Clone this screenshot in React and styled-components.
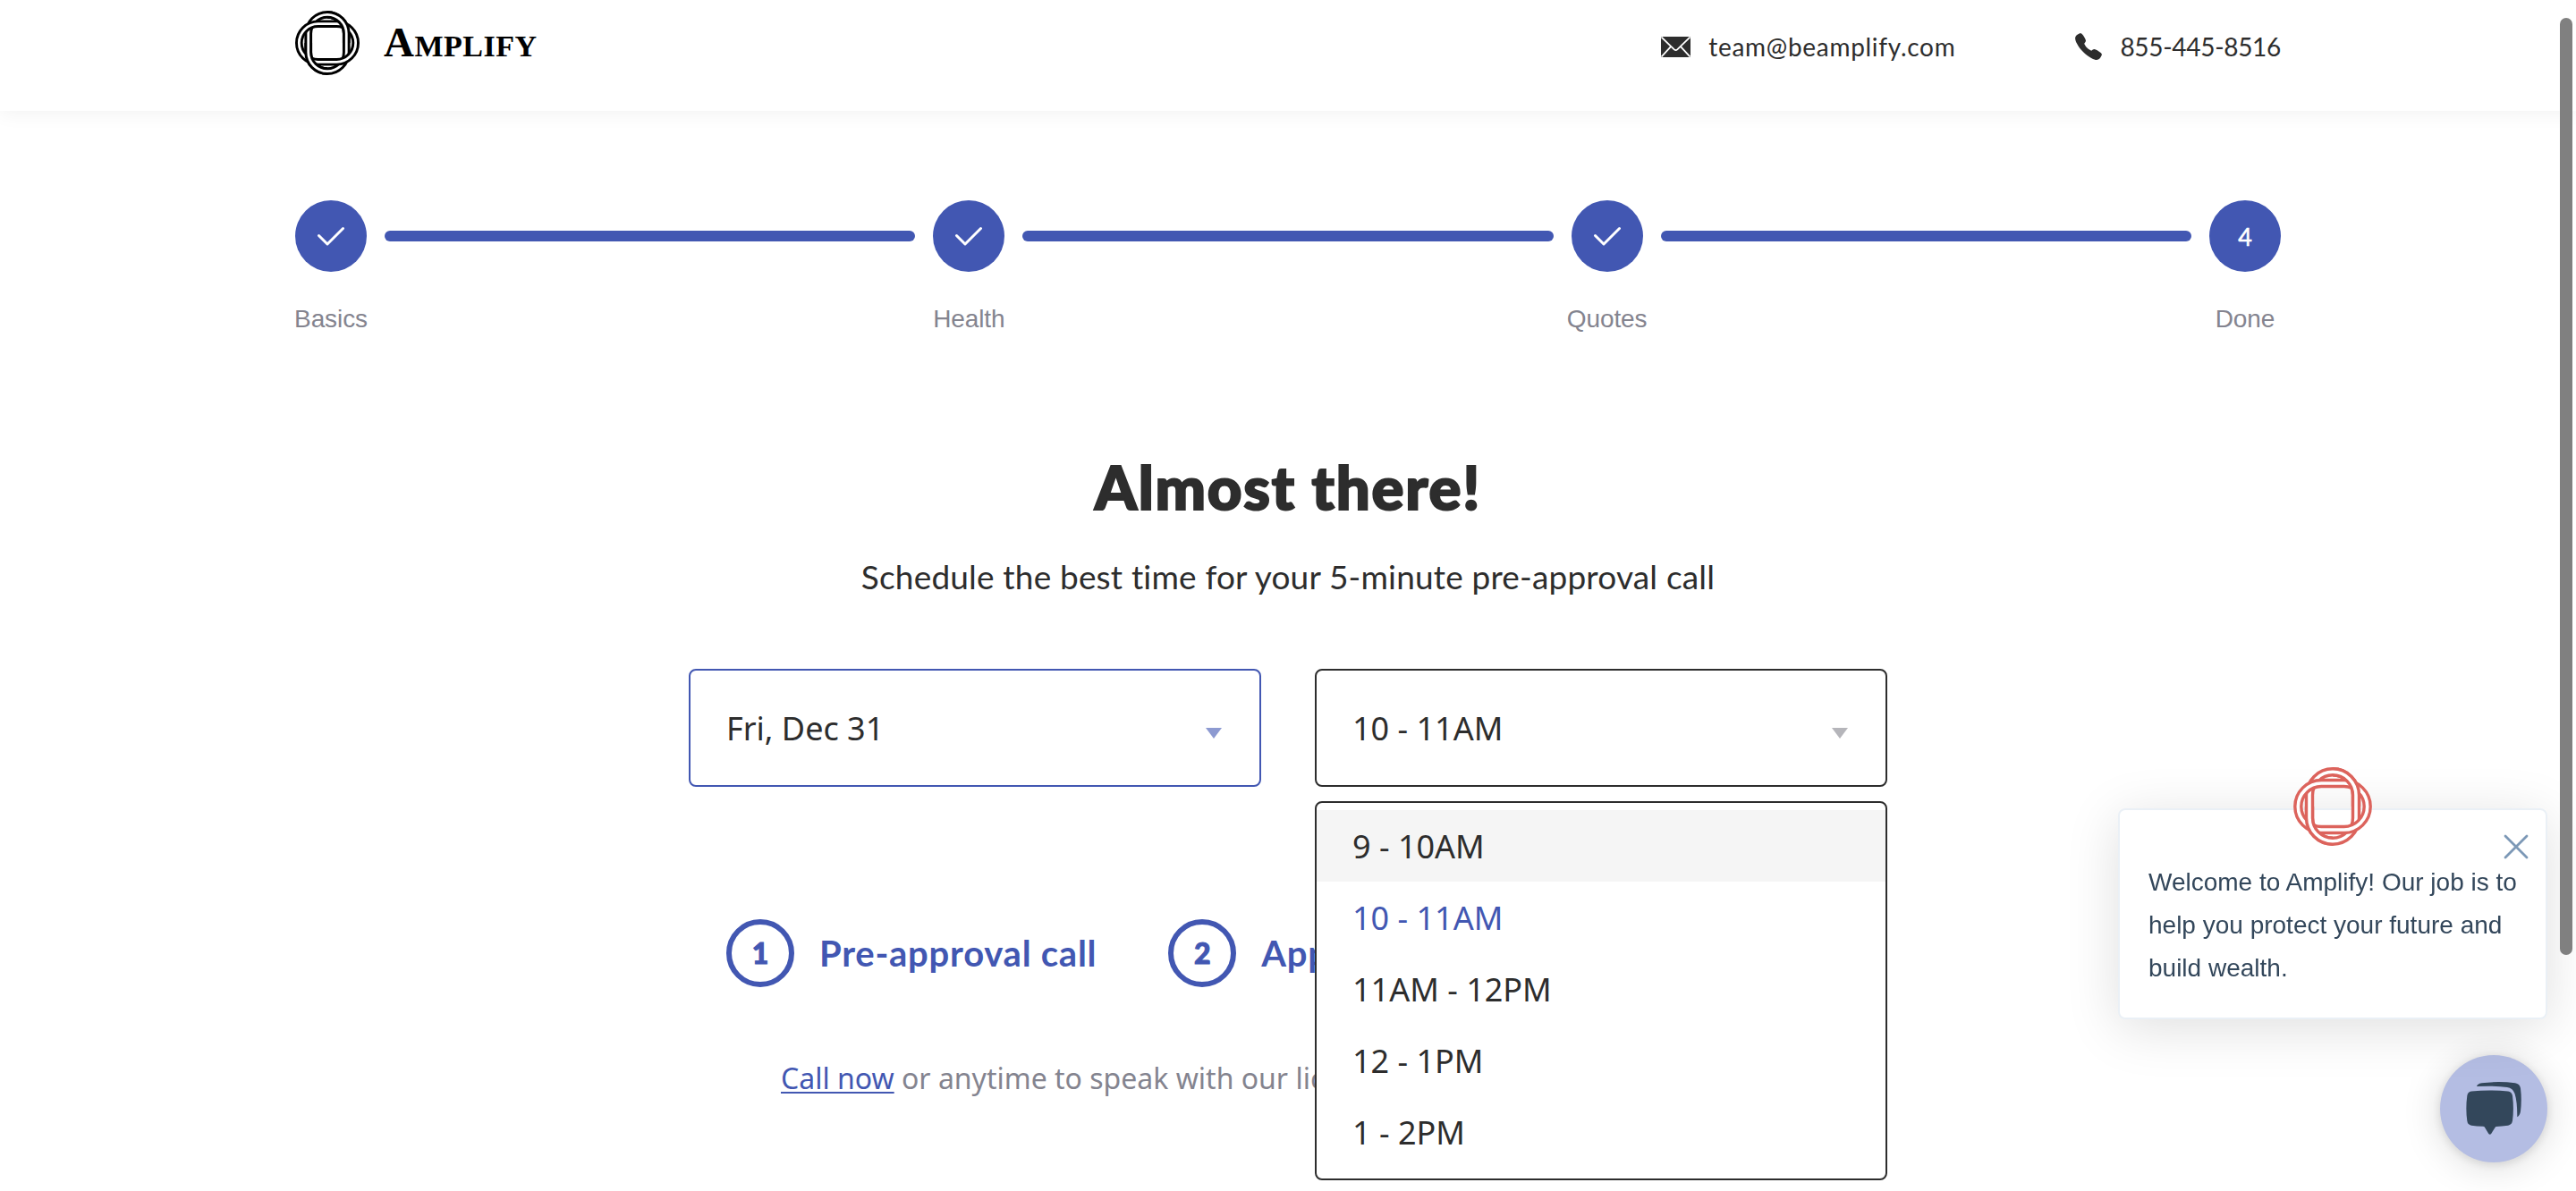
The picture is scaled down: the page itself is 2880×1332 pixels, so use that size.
import React from "react";
import styled, { createGlobalStyle } from "styled-components";
import { IoCall } from "react-icons/io5";

const blue = "#4257b2";
const ink = "#2d2d2d";
const grey = "#84848f";

const GlobalStyle = createGlobalStyle`
  * { box-sizing: border-box; }
  html, body { margin: 0; padding: 0; background: #fff; overflow: hidden; }
`;

const Page = styled.div`
  height: 1332px;
  overflow: hidden;
  background: #fff;
  color: ${ink};
  font-family: Lato, "Open Sans", sans-serif;
`;

const Header = styled.header`
  display: flex;
  justify-content: space-between;
  align-items: flex-start;
  height: 124px;
  padding: 12px 330px 0;
  background: #fff;
  box-shadow: 0 4px 20px rgba(0, 0, 0, 0.05);
`;

const Brand = styled.a`
  display: flex;
  align-items: center;
  height: 72px;
  gap: 27px;
  color: #000;
`;

const Wordmark = styled.div`
  padding-top: 3px;
  font-family: "Liberation Serif", serif;
  font-weight: 700;
  font-size: 34px;
  line-height: 48px;
  letter-spacing: 0.5px;
  white-space: nowrap;

  &::first-letter {
    font-size: 47px;
  }
`;

const Contacts = styled.div`
  display: flex;
  gap: 132px;
  padding-top: 23px;
`;

const Contact = styled.a`
  display: flex;
  align-items: center;
  height: 34px;
  gap: ${(p) => p.$gap}px;
  font-size: 28px;
  line-height: 34px;
  letter-spacing: ${(p) => p.$tracking}px;
  color: ${ink};
  white-space: nowrap;
`;

const Stepper = styled.ol`
  display: flex;
  align-items: flex-start;
  gap: 20px;
  margin: 0;
  padding: 100px 330px 0;
  list-style: none;
`;

const Step = styled.li`
  display: flex;
  flex-direction: column;
  align-items: center;
  flex: 0 0 80px;
  width: 80px;
`;

const StepDot = styled.div`
  display: flex;
  align-items: center;
  justify-content: center;
  width: 80px;
  height: 80px;
  border-radius: 50%;
  background: ${blue};
  color: #fff;
  font-size: 27px;
  -webkit-text-stroke: 0.5px #fff;
`;

const StepLabel = styled.span`
  margin: 37px 0 -1px;
  font-family: "Liberation Sans", Arial, sans-serif;
  font-size: 28px;
  line-height: 32px;
  letter-spacing: -0.1px;
  color: ${grey};
  white-space: nowrap;
`;

const StepBar = styled.li`
  flex: 1;
  height: 12px;
  margin-top: 34px;
  border-radius: 6px;
  background: ${blue};
`;

const Main = styled.main`
  display: flex;
  flex-direction: column;
  align-items: center;
  padding-top: 132px;
`;

const Title = styled.h1`
  margin: 0;
  font-size: 67px;
  font-weight: 900;
  line-height: 80px;
  letter-spacing: 1.8px;
  -webkit-text-stroke: 2.2px ${ink};
`;

const Subtitle = styled.p`
  margin: 37px 0 0;
  font-size: 37px;
  line-height: 48px;
  letter-spacing: 0.18px;
`;

const Fields = styled.div`
  display: flex;
  gap: 60px;
  margin-top: 79px;
`;

const Field = styled.div`
  position: relative;
  width: 640px;
`;

const SelectBox = styled.button`
  display: flex;
  align-items: center;
  justify-content: space-between;
  width: 100%;
  height: 132px;
  padding: 0 42px 0 40px;
  border: 2px solid ${(p) => p.$color};
  border-radius: 8px;
  background: #fff;
  font-family: "Noto Sans", sans-serif;
  font-size: 36px;
  color: ${ink};
`;

const Caret = styled.span`
  margin-top: 12px;
  border: 9.5px solid transparent;
  border-top: 12px solid ${(p) => p.$color};
  border-bottom: 0;
`;

const Menu = styled.ul`
  position: absolute;
  top: 148px;
  left: 0;
  width: 100%;
  height: 424px;
  margin: 0;
  padding: 8px 0 12px;
  border: 2px solid ${ink};
  border-radius: 8px;
  background: #fff;
  list-style: none;
  z-index: 2;
`;

const Option = styled.li`
  height: 80px;
  padding-left: 40px;
  font-family: "Noto Sans", sans-serif;
  font-size: 36px;
  line-height: 82px;
  color: ${(p) => (p.$selected ? blue : ink)};
  background: ${(p) => (p.$hovered ? "#f5f5f5" : "transparent")};
`;

const Lower = styled.section`
  width: 1340px;
  margin-top: 148px;
`;

const Phases = styled.div`
  display: flex;
  gap: 80px;
  padding-left: 42px;
`;

const Phase = styled.div`
  display: flex;
  align-items: center;
  gap: 28px;
  color: ${blue};
  font-size: 40px;
  font-weight: 700;
  line-height: 48px;
  letter-spacing: 0.75px;
  white-space: nowrap;
`;

const PhaseNumber = styled.span`
  display: flex;
  align-items: center;
  justify-content: center;
  flex: none;
  width: 76px;
  height: 76px;
  border: 6px solid ${blue};
  border-radius: 50%;
  font-size: 32px;
  font-weight: 900;
  letter-spacing: 0;
  -webkit-text-stroke: 1px ${blue};
`;

const CallLine = styled.p`
  margin: 80px 0 0;
  padding-left: 103px;
  font-family: "Noto Sans", sans-serif;
  font-size: 32px;
  line-height: 44px;
  color: ${grey};
  white-space: nowrap;
`;

const CallLink = styled.a`
  color: ${blue};
  text-decoration: underline;
  text-decoration-thickness: 2px;
  text-underline-offset: 3px;
`;

const Widget = styled.aside`
  position: fixed;
  right: 32px;
  bottom: 32px;
  display: flex;
  flex-direction: column;
  align-items: flex-end;
  gap: 40px;
`;

const Greeting = styled.div`
  position: relative;
  width: 480px;
  height: 236px;
  padding: 57px 20px 31px 32px;
  border: 2px solid #eaf0f6;
  border-radius: 8px;
  background: #fff;
  box-shadow: 0 10px 60px rgba(0, 0, 0, 0.13);
  font-family: "Liberation Sans", Arial, sans-serif;
  font-size: 28px;
  line-height: 48px;
  color: #33475b;
`;

const Avatar = styled.span`
  position: absolute;
  top: -48px;
  left: 194px;
  display: flex;
`;

const Close = styled.span`
  position: absolute;
  top: 27px;
  right: 19px;
  display: flex;
`;

const ChatButton = styled.button`
  display: flex;
  align-items: center;
  justify-content: center;
  width: 120px;
  height: 120px;
  padding: 0;
  border: 0;
  border-radius: 50%;
  background: #b4bde3;
  box-shadow: 0 2px 12px rgba(0, 0, 0, 0.12), 0 4px 44px rgba(0, 0, 0, 0.15);
`;

const ScrollThumb = styled.div`
  position: fixed;
  top: 20px;
  right: 4px;
  width: 14px;
  height: 1048px;
  border-radius: 7px;
  background: #808080;
`;

function Loop({ color, line, wide }) {
  const w = wide ? 77.4 : 52;
  const h = wide ? 52 : 77.4;
  const box = { x: -w / 2, y: -h / 2, width: w, height: h, rx: 26, fill: "none" };
  return (
    <g>
      <rect {...box} stroke={color} strokeWidth={7 + line} />
      <rect {...box} stroke="#fff" strokeWidth={7 - line} />
    </g>
  );
}

function Knot({ size, color, line, id }) {
  return (
    <svg width={size} height={size} viewBox="-44 -44 88 88">
      <clipPath id={id}>
        <rect x="0" y="-44" width="44" height="44" />
        <rect x="-44" y="0" width="44" height="44" />
      </clipPath>
      <Loop color={color} line={line} />
      <Loop color={color} line={line} wide />
      <g clipPath={`url(#${id})`}>
        <Loop color={color} line={line} />
      </g>
    </svg>
  );
}

const Envelope = () => (
  <svg width="33" height="23" viewBox="0 0 33 23">
    <rect width="33" height="23" rx="1" fill={ink} />
    <path
      d="M0.5 0.5 L14.8 14.4 Q16.5 15.8 18.2 14.4 L32.5 0.5 M0.5 22.5 L11 11.2 M32.5 22.5 L22 11.2"
      fill="none"
      stroke="#fff"
      strokeWidth="1.8"
    />
  </svg>
);

const Check = () => (
  <svg width="32" height="22" viewBox="0 0 32 22" fill="none" stroke="#fff" strokeWidth="3" strokeLinecap="round" strokeLinejoin="round">
    <path d="M2.5 10.5 L12 20 L29.5 2.5" />
  </svg>
);

const Cross = () => (
  <svg width="28" height="28" viewBox="0 0 28 28" stroke="#7c98b6" strokeWidth="2.8" strokeLinecap="round">
    <path d="M2 2 L26 26 M26 2 L2 26" />
  </svg>
);

const Bubbles = () => (
  <svg width="62" height="60" viewBox="0 0 62 60" fill="#33475b">
    <path d="M6 10.6 Q27 8.2 47 10.6 Q51.2 11.3 52 15.5 Q53.8 30 52 43.5 Q51.2 48 47 48.7 Q40 49.6 33.6 49.9 Q32.5 50.4 28.5 57.6 Q26.7 60 25 57.6 L20.8 50.6 Q20.4 49.9 19 49.8 Q12 49.5 6 48.7 Q1.9 48 1.3 43.5 Q-0.6 30 1.3 15.5 Q2 11.3 6 10.6 Z" />
    <path d="M12 5 Q12.5 2.3 17.5 1.3 Q36 -1 55 1.2 Q60 2 61 7 Q62.6 20 61 33 Q60.3 37.5 57.3 39.3 Q57.4 22 54.5 13 Q52.5 7 46 5.9 Q34 4 12 5 Z" />
  </svg>
);

const steps = ["Basics", "Health", "Quotes", "Done"];
const slots = ["9 - 10AM", "10 - 11AM", "11AM - 12PM", "12 - 1PM", "1 - 2PM"];

export default function App() {
  return (
    <Page>
      <GlobalStyle />
      <Header>
        <Brand>
          <Knot size={72} color="#000" line={3.6} id="brand-knot" />
          <Wordmark>AMPLIFY</Wordmark>
        </Brand>
        <Contacts>
          <Contact $gap={20} $tracking={0.7}>
            <Envelope />
            <span>team@beamplify.com</span>
          </Contact>
          <Contact $gap={18} $tracking={-0.3}>
            <IoCall size={34} />
            <span>855-445-8516</span>
          </Contact>
        </Contacts>
      </Header>

      <Stepper>
        {steps.map((label, i) => (
          <React.Fragment key={label}>
            {i > 0 && <StepBar />}
            <Step>
              <StepDot>{i < 3 ? <Check /> : 4}</StepDot>
              <StepLabel>{label}</StepLabel>
            </Step>
          </React.Fragment>
        ))}
      </Stepper>

      <Main>
        <Title>Almost there!</Title>
        <Subtitle>Schedule the best time for your 5-minute pre-approval call</Subtitle>
        <Fields>
          <Field>
            <SelectBox $color={blue}>
              Fri, Dec 31
              <Caret $color="#8d9ad1" />
            </SelectBox>
          </Field>
          <Field>
            <SelectBox $color={ink}>
              10 - 11AM
              <Caret $color="#b5b5ba" />
            </SelectBox>
            <Menu>
              {slots.map((slot, i) => (
                <Option key={slot} $hovered={i === 0} $selected={i === 1}>
                  {slot}
                </Option>
              ))}
            </Menu>
          </Field>
        </Fields>
        <Lower>
          <Phases>
            <Phase>
              <PhaseNumber>1</PhaseNumber>
              <span>Pre-approval call</span>
            </Phase>
            <Phase>
              <PhaseNumber>2</PhaseNumber>
              <span>App</span>
            </Phase>
          </Phases>
          <CallLine>
            <CallLink>Call now</CallLink> or anytime to speak with our lic
          </CallLine>
        </Lower>
      </Main>

      <Widget>
        <Greeting>
          <Avatar>
            <Knot size={88} color="#dc635c" line={3.4} id="avatar-knot" />
          </Avatar>
          <Close>
            <Cross />
          </Close>
          Welcome to Amplify! Our job is to help you protect your future and build wealth.
        </Greeting>
        <ChatButton>
          <Bubbles />
        </ChatButton>
      </Widget>
      <ScrollThumb />
    </Page>
  );
}
